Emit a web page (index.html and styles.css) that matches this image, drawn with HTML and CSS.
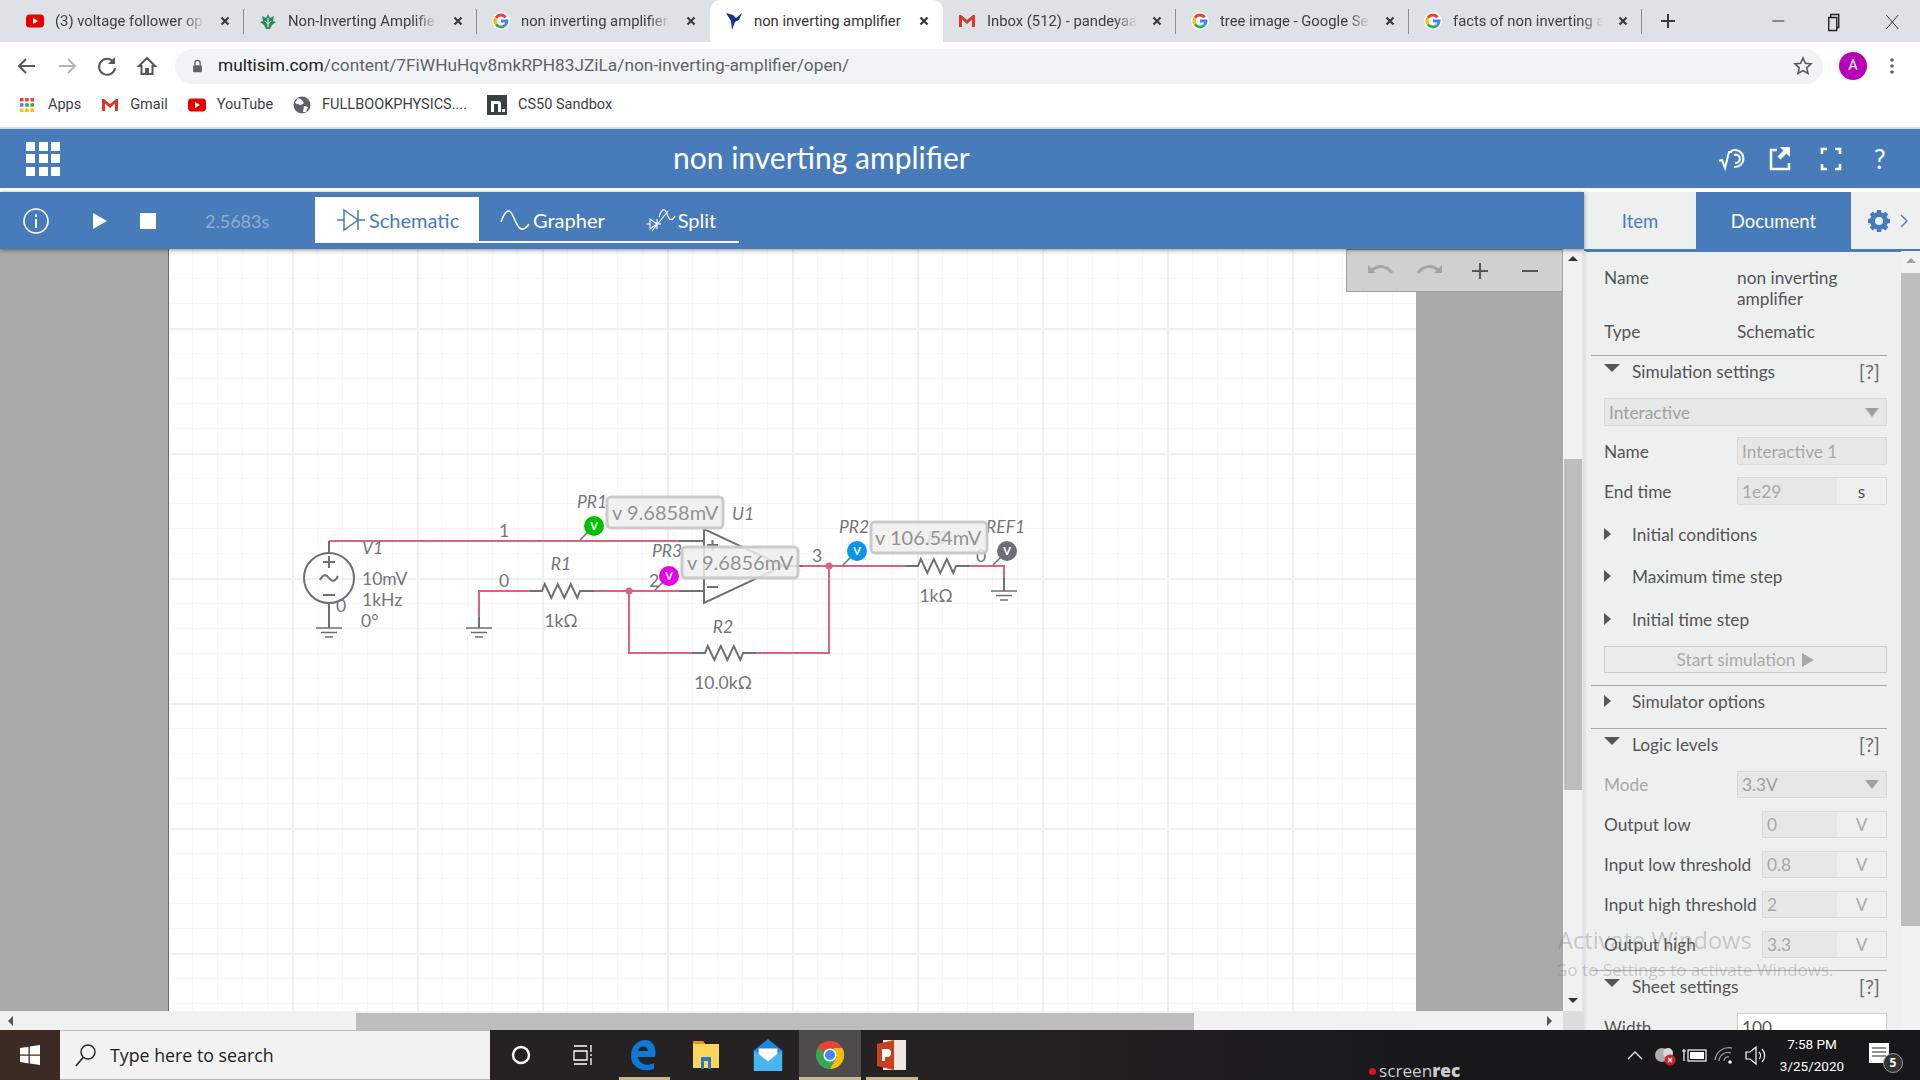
FILE: index.html
```html
<!DOCTYPE html>
<html lang="en">
<head>
<meta charset="utf-8">
<title>non inverting amplifier</title>
<link rel="stylesheet" href="styles.css">
</head>
<body>
<svg class="defs" width="0" height="0">
  <symbol id="g" viewBox="0 0 18 18">
    <circle cx="9" cy="9" r="9" fill="#fff"/>
    <g fill="none" stroke-width="3">
      <path d="M13.6 5.2A6 6 0 0 0 4 5.8" stroke="#ea4335"/>
      <path d="M4 5.8A6 6 0 0 0 4 12.2" stroke="#fbbc05"/>
      <path d="M4 12.2A6 6 0 0 0 13.2 13.2" stroke="#34a853"/>
      <path d="M13.2 13.2A6 6 0 0 0 15 9H9" stroke="#4285f4"/>
    </g>
  </symbol>
  <symbol id="yt" viewBox="0 0 18 18">
    <rect x="0" y="2.5" width="18" height="13" rx="3.5" fill="#e60000"/>
    <path d="M7 6l5 3-5 3z" fill="#fff"/>
  </symbol>
  <symbol id="gm" viewBox="0 0 18 18">
    <path d="M1 15V3h2l6 5 6-5h2v12h-3V7.5L9 12 4 7.5V15z" fill="#d8382c"/>
  </symbol>
  <symbol id="x" viewBox="0 0 10 10">
    <path d="M1.5 1.5l7 7M8.5 1.5l-7 7" stroke="#3a3a3c" stroke-width="2.200" fill="none"/>
  </symbol>
  <symbol id="gnd" viewBox="0 0 28 12">
    <path d="M1 1h26M6 5.500h16M10 10h8" stroke="#6f6f76" stroke-width="1.600" fill="none"/>
  </symbol>
</svg>

<header class="tabstrip">
  <div class="tab"><svg class="fav"><use href="#yt"/></svg><span class="tab-title">(3) voltage follower op</span><svg class="tab-x"><use href="#x"/></svg></div>
  <div class="tab"><svg class="fav" viewBox="0 0 18 18"><path d="M9 2l2 4 4-2-1 5 3 1-4 3-2 4H7l-2-4-4-3 3-1-1-5 4 2z" fill="#2f8a63"/><path d="M9 6v9M6 9l3 3 3-3" stroke="#fff" stroke-width="1" fill="none"/></svg><span class="tab-title">Non-Inverting Amplifie</span><svg class="tab-x"><use href="#x"/></svg></div>
  <div class="tab"><svg class="fav"><use href="#g"/></svg><span class="tab-title">non inverting amplifier</span><svg class="tab-x"><use href="#x"/></svg></div>
  <div class="tab tab-active"><svg class="fav" viewBox="0 0 18 18"><path d="M1 1l7 2 3 3 6-5-3 7-4 2-3 8-1-9z" fill="#13358f"/></svg><span class="tab-title">non inverting amplifier</span><svg class="tab-x"><use href="#x"/></svg></div>
  <div class="tab"><svg class="fav"><use href="#gm"/></svg><span class="tab-title">Inbox (512) - pandeyaa</span><svg class="tab-x"><use href="#x"/></svg></div>
  <div class="tab"><svg class="fav"><use href="#g"/></svg><span class="tab-title">tree image - Google Se</span><svg class="tab-x"><use href="#x"/></svg></div>
  <div class="tab"><svg class="fav"><use href="#g"/></svg><span class="tab-title">facts of non inverting a</span><svg class="tab-x"><use href="#x"/></svg></div>
  <svg class="newtab" viewBox="0 0 16 16"><path d="M8 1v14M1 8h14" stroke="#3a3a3c" stroke-width="2"/></svg>
  <div class="winctl">
    <svg class="winbtn" viewBox="0 0 56 42"><path d="M22 21h12" stroke="#333"/></svg>
    <svg class="winbtn" viewBox="0 0 56 42"><path d="M22.500 17.500h8v13h-8zM24.500 17v-2.500h8v13h-2" fill="none" stroke="#222" stroke-width="1.400"/></svg>
    <svg class="winbtn" viewBox="0 0 56 42"><path d="M23 15l12 14M35 15L23 29" stroke="#333" stroke-width="1"/></svg>
  </div>
</header>

<nav class="omnibar">
  <svg class="navbtn" viewBox="0 0 40 40"><path d="M28 20H13M19 13l-7 7 7 7" fill="none" stroke="#55585c" stroke-width="2"/></svg>
  <svg class="navbtn" viewBox="0 0 40 40"><path d="M12 20h15M21 13l7 7-7 7" fill="none" stroke="#b4b6b9" stroke-width="2"/></svg>
  <svg class="navbtn" viewBox="0 0 40 40"><path d="M26.500 16A8 8 0 1 0 28 22" fill="none" stroke="#55585c" stroke-width="2"/><path d="M28 11v7h-7z" fill="#55585c"/></svg>
  <svg class="navbtn" viewBox="0 0 40 40"><path d="M20 12l-8 8h2.500v8h4.500v-5h2v5h4.500v-8H28z" fill="none" stroke="#55585c" stroke-width="2"/></svg>
  <div class="urlbar">
    <svg class="lock" viewBox="0 0 12 16"><path d="M3 7V4.500a3 3 0 0 1 6 0V7" fill="none" stroke="#5f6368" stroke-width="1.500"/><rect x="1" y="7" width="10" height="8" rx="1" fill="#5f6368"/></svg>
    <span class="url"><b>multisim.com</b>/content/7FiWHuHqv8mkRPH83JZiLa/non-inverting-amplifier/open/</span>
    <svg class="star" viewBox="0 0 20 20"><path d="M10 2l2.400 5.300 5.600.6-4.200 3.900 1.200 5.700-5-2.900-5 2.900 1.200-5.700L2 7.900l5.600-.6z" fill="none" stroke="#55585c" stroke-width="1.600"/></svg>
  </div>
  <div class="avatar">A</div>
  <svg class="dots" viewBox="0 0 4 18"><circle cx="2" cy="3" r="1.800"/><circle cx="2" cy="9" r="1.800"/><circle cx="2" cy="15" r="1.800"/></svg>
</nav>

<div class="bookmarks">
  <div class="bm"><svg class="bm-apps" viewBox="0 0 14 14"><g fill="#ea4335"><rect width="3.500" height="3.500"/><rect x="5.200" width="3.500" height="3.500"/><rect x="10.500" width="3.500" height="3.500"/></g><g fill="#4285f4"><rect y="5.200" width="3.500" height="3.500"/></g><g fill="#34a853"><rect x="5.200" y="5.200" width="3.500" height="3.500"/><rect x="10.500" y="5.200" width="3.500" height="3.500"/></g><g fill="#fbbc05"><rect y="10.500" width="3.500" height="3.500"/><rect x="5.200" y="10.500" width="3.500" height="3.500"/><rect x="10.500" y="10.500" width="3.500" height="3.500"/></g></svg><span>Apps</span></div>
  <div class="bm"><svg class="fav"><use href="#gm"/></svg><span>Gmail</span></div>
  <div class="bm"><svg class="fav"><use href="#yt"/></svg><span>YouTube</span></div>
  <div class="bm"><svg class="fav" viewBox="0 0 18 18"><circle cx="9" cy="9" r="8.500" fill="#5f6368"/><path d="M5 2l4 2 2 3-3 2-4-1-2-1zM11 10l4 1-2 5-3 0z" fill="#fff"/></svg><span>FULLBOOKPHYSICS....</span></div>
  <div class="bm"><svg class="bm-n" viewBox="0 0 20 20"><rect width="20" height="20" fill="#3b4043"/><path d="M4 17V6h7a3 3 0 0 1 3 3v8h-3V9H7v8zM15 14h3v3h-3z" fill="#fff"/></svg><span>CS50 Sandbox</span></div>
</div>

<div class="app">
  <div class="appbar">
    <div class="grid-btn"><i></i><i></i><i></i><i></i><i></i><i></i><i></i><i></i><i></i></div>
    <h1 class="doc-title">non inverting amplifier</h1>
    <div class="appbar-icons">
      <svg class="hdr-ico" viewBox="-3 0 32 32"><path d="M1 18l3-1 3 8 4-16h3" fill="none" stroke="#fff" stroke-width="2"/><path d="M13 8a8.500 8.500 0 1 1 3 16M16 12a4.200 4.200 0 1 1 1 8" fill="none" stroke="#fff" stroke-width="2"/></svg>
      <svg class="hdr-ico" viewBox="2 0 32 32"><path d="M14 7H8v19h18v-6" fill="none" stroke="#fff" stroke-width="2.500"/><path d="M27 4v10l-3.500-3.500-6 6-3-3 6-6L17 4z" fill="#fff"/></svg>
      <svg class="hdr-ico" viewBox="0 0 32 32"><path d="M7 11V6h5M20 6h5v5M25 21v5h-5M12 26H7v-5" fill="none" stroke="#fff" stroke-width="2.600"/></svg>
      <span class="help">?</span>
    </div>
  </div>

  <div class="main">
    <section class="workspace">
      <div class="simbar">
        <svg class="info" viewBox="0 0 26 26"><circle cx="13" cy="13" r="12" fill="none" stroke="#fff" stroke-width="1.600"/><rect x="12" y="11" width="2" height="9" fill="#fff"/><rect x="12" y="6.500" width="2" height="2.500" fill="#fff"/></svg>
        <svg class="play" viewBox="0 0 14 16"><path d="M0 0l14 8L0 16z" fill="#fff"/></svg>
        <div class="stop"></div>
        <span class="simtime">2.5683s</span>
        <div class="viewtabs">
          <div class="viewtab viewtab-on"><svg class="vt-ico" viewBox="0 0 28 24"><path d="M0 12h7M7 2l14 10L7 22zM21 2v20M21 12h7" fill="none" stroke="#477bb9" stroke-width="1.500"/></svg><span>Schematic</span></div>
          <div class="viewtab viewtab-g"><svg class="vt-ico2" viewBox="0 0 30 24"><path d="M1 14C6 0 10 0 14 10S22 26 29 16" fill="none" stroke="#fff" stroke-width="1.500"/></svg><span>Grapher</span></div>
          <div class="viewtab viewtab-s"><svg class="vt-ico2" viewBox="0 0 30 24"><path d="M0 16h4M4 11l7 5-7 5zM11 11v10M11 16h4M6 23L22 3" fill="none" stroke="#fff" stroke-width="1.100"/><path d="M13 9C16 0 19 0 21 6S26 14 29 8" fill="none" stroke="#fff" stroke-width="1.100"/></svg><span>Split</span></div>
        </div>
      </div>

      <div class="canvas-area">
        <div class="canvas">
          <div class="page">
            <svg class="schematic" viewBox="168 249 1248 762" width="1248" height="762">
              <g class="wire">
                <path d="M329 541H679"/>
                <path d="M479 617V591H530"/>
                <path d="M592 591H679"/>
                <path d="M629 591V653H692"/>
                <path d="M755 653H829V566"/>
                <path d="M803 566H905"/>
                <path d="M966 566H1004V578"/>
              </g>
              <circle class="dot" cx="629" cy="591" r="3.500"/>
              <circle class="dot" cx="829" cy="566" r="3.500"/>
              <g class="part">
                <path d="M329 541V553M329 603V628"/>
                <circle cx="329" cy="578" r="25"/>
                <path d="M323 562h12M329 556v12M323 595h12"/>
                <path d="M320 580c3-6 6-6 9-2s6 4 9-2"/>
                <path d="M479 617V628M1004 578V591"/>
                <path d="M530 591h12l2.800-7 6.500 14 6.500-14 6.500 14 6.500-14 6.500 14 2.700-7h14"/>
                <path d="M692 653h13l2.800-7 6.500 14 6.500-14 6.500 14 6.500-14 6.500 14 2.700-7h13"/>
                <path d="M905 566h13l2.800-7 6.500 14 6.500-14 6.500 14 6.500-14 6.500 14 2.700-7h13"/>
                <path d="M679 541h25M679 591h25M783 566h20"/>
                <path d="M704 529V603L783 566z"/>
                <path d="M707 545h11M712.500 540v11M707 587h11"/>
              </g>
              <use href="#gnd" x="315" y="627" width="28" height="12"/>
              <use href="#gnd" x="465" y="627" width="28" height="12"/>
              <use href="#gnd" x="990" y="590" width="28" height="12"/>

              <g class="lbl">
                <text x="504" y="537" text-anchor="middle">1</text>
                <text x="504" y="587" text-anchor="middle">0</text>
                <text x="362" y="585">10mV</text>
                <text x="362" y="606">1kHz</text>
                <text x="361" y="627">0°</text>
                <text x="341" y="612" text-anchor="middle">0</text>
                <text x="561" y="627" text-anchor="middle">1kΩ</text>
                <text x="723" y="689" text-anchor="middle">10.0kΩ</text>
                <text x="936" y="602" text-anchor="middle">1kΩ</text>
                <text x="817" y="562" text-anchor="middle">3</text>
                <text x="649" y="587">2</text>
                <text x="981" y="562" text-anchor="middle">0</text>
              </g>
              <g class="lbl lbl-i">
                <text x="362" y="554">V1</text>
                <text x="561" y="570" text-anchor="middle">R1</text>
                <text x="723" y="633" text-anchor="middle">R2</text>
                <text x="937" y="544" text-anchor="middle">R3</text>
                <text x="577" y="508">PR1</text>
                <text x="732" y="520">U1</text>
                <text x="652" y="557">PR3</text>
                <text x="839" y="533">PR2</text>
                <text x="986" y="533">REF1</text>
              </g>

              <g class="tail">
                <path d="M580 540L594 526"/>
                <path d="M655 590L669 576"/>
                <path d="M843 565L857 551"/>
                <path d="M993 565L1007 551"/>
              </g>
              <circle class="pb-green" cx="594" cy="526" r="10"/>
              <circle class="pb-mag" cx="669" cy="576" r="10"/>
              <circle class="pb-blue" cx="857" cy="551" r="10"/>
              <circle class="pb-gray" cx="1007" cy="551" r="10"/>
              <g class="pb-v" text-anchor="middle">
                <text x="594" y="530">V</text>
                <text x="669" y="580">V</text>
                <text x="857" y="555">V</text>
                <text x="1007" y="555">V</text>
              </g>

              <rect class="vbox" x="607" y="497" width="116" height="31" rx="4"/>
              <text class="vtext" x="612" y="520">v 9.6858mV</text>
              <rect class="vbox" x="682" y="547" width="116" height="31" rx="4"/>
              <text class="vtext" x="687" y="570">v 9.6856mV</text>
              <rect class="vbox" x="871" y="522" width="116" height="31" rx="4"/>
              <text class="vtext" x="875" y="545">v 106.54mV</text>
            </svg>
          </div>
          <div class="zoombar">
            <svg class="zb" viewBox="0 0 30 20"><path d="M3 4v8h8z" fill="#a4a4a4"/><path d="M7 9c6-5 14-5 20 3" fill="none" stroke="#a4a4a4" stroke-width="3"/></svg>
            <svg class="zb" viewBox="0 0 30 20"><path d="M27 4v8h-8z" fill="#a4a4a4"/><path d="M23 9c-6-5-14-5-20 3" fill="none" stroke="#a4a4a4" stroke-width="3"/></svg>
            <svg class="zb" viewBox="0 0 30 20"><path d="M15 2v16M7 10h16" stroke="#555" stroke-width="2"/></svg>
            <svg class="zb" viewBox="0 0 30 20"><path d="M7 10h16" stroke="#555" stroke-width="2"/></svg>
          </div>
        </div>
        <div class="vscroll"><i class="arr-up"></i><div class="vthumb"></div><i class="arr-down"></i></div>
        <div class="hscroll"><i class="arr-left"></i><div class="hthumb"></div><i class="arr-right"></i></div>
        <div class="corner"></div>
      </div>
    </section>

    <aside class="panel">
      <div class="panel-tabs">
        <div class="ptab ptab-item">Item</div>
        <div class="ptab ptab-doc">Document</div>
        <div class="ptab-gear">
          <svg class="gear" viewBox="0 0 24 24"><circle cx="12" cy="12" r="6.500" fill="none" stroke="#477bb9" stroke-width="5"/><g stroke="#477bb9" stroke-width="4.500"><path d="M12 1v5M12 18v5M1 12h5M18 12h5M4.200 4.200l3.500 3.500M16.300 16.300l3.500 3.500M19.800 4.200l-3.500 3.500M7.700 16.300l-3.500 3.500"/></g></svg>
          <svg class="chev" viewBox="0 0 8 14"><path d="M1 1l6 6-6 6" fill="none" stroke="#477bb9" stroke-width="1.400"/></svg>
        </div>
      </div>
      <div class="panel-main">
        <div class="panel-body">
          <div class="prop prop-tall"><span class="k">Name</span><span class="v">non inverting amplifier</span></div>
          <div class="prop mt11"><span class="k">Type</span><span class="v">Schematic</span></div>

          <div class="sec mt13"><i class="tri-d"></i><span class="sec-name">Simulation settings</span><span class="qm">[?]</span></div>
          <div class="sel mt12"><span>Interactive</span><i class="sel-arr"></i></div>
          <div class="prop h28 mt11"><span class="k">Name</span><div class="inp inp-full">Interactive 1</div></div>
          <div class="prop h28 mt12"><span class="k">End time</span><div class="inp-wrap"><div class="inp">1e29</div><div class="unit unit-on">s</div></div></div>
          <div class="sub mt14"><i class="tri-r"></i><span>Initial conditions</span></div>
          <div class="sub mt12"><i class="tri-r"></i><span>Maximum time step</span></div>
          <div class="sub mt13"><i class="tri-r"></i><span>Initial time step</span></div>
          <div class="btn mt12"><span>Start simulation</span><i class="btn-arr"></i></div>

          <div class="sec mt12"><i class="tri-r"></i><span class="sec-name">Simulator options</span></div>
          <div class="sec mt12"><i class="tri-d"></i><span class="sec-name">Logic levels</span><span class="qm">[?]</span></div>
          <div class="prop h27 mt12 dim"><span class="k">Mode</span><div class="sel sel-sm"><span>3.3V</span><i class="sel-arr"></i></div></div>
          <div class="prop h27 mt13"><span class="k">Output low</span><div class="inp-wrap inp-short"><div class="inp">0</div><div class="unit">V</div></div></div>
          <div class="prop h27 mt13"><span class="k">Input low threshold</span><div class="inp-wrap inp-short"><div class="inp">0.8</div><div class="unit">V</div></div></div>
          <div class="prop h27 mt13"><span class="k">Input high threshold</span><div class="inp-wrap inp-short"><div class="inp">2</div><div class="unit">V</div></div></div>
          <div class="prop h27 mt13"><span class="k">Output high</span><div class="inp-wrap inp-short"><div class="inp">3.3</div><div class="unit">V</div></div></div>

          <div class="sec mt12"><i class="tri-d"></i><span class="sec-name">Sheet settings</span><span class="qm">[?]</span></div>
          <div class="prop h28 mt12"><span class="k">Width</span><div class="inp inp-white">100</div></div>
        </div>
        <div class="pscroll"><i class="arr-up arr-up-dim"></i><div class="pthumb"></div><i class="arr-down"></i></div>
      </div>
    </aside>
  </div>
</div>

<footer class="taskbar">
  <div class="startbtn"><svg class="win" viewBox="0 0 20 20"><path d="M0 3l8.500-1.300v7.800H0zM9.800 1.500L20 0v9.500H9.800zM0 10.700h8.500v7.700L0 17.100zM9.800 10.700H20V20L9.800 18.600z" fill="#fff"/></svg></div>
  <div class="searchbox">
    <svg class="mag" viewBox="0 0 22 24"><circle cx="13" cy="9" r="7" fill="none" stroke="#222" stroke-width="1.400"/><path d="M8 14.500L1 23" stroke="#222" stroke-width="1.600"/></svg>
    <span>Type here to search</span>
  </div>
  <div class="tb"><svg class="tb-ico" viewBox="0 0 24 24"><circle cx="12" cy="12" r="8" fill="none" stroke="#fff" stroke-width="2.400"/></svg></div>
  <div class="tb"><svg class="tb-ico" viewBox="0 0 24 24"><path d="M3 3h13M3 21h13M3 8h13v9H3z" fill="none" stroke="#fff" stroke-width="1.300"/><path d="M20 2v7M20 11v2M20 15v7" stroke="#fff" stroke-width="1.300"/></svg></div>
  <div class="tb tb-run"><svg class="tb-ico tb-big" viewBox="0 0 28 32"><path d="M25 18H8c.5 7 10 10 16 6v6C12 34 1 28 1 17 1 6 9 1 15 1c7 0 12 6 10 17zM18 12c0-6-9-6-10 0z" fill="#0f78d4"/></svg></div>
  <div class="tb"><svg class="tb-ico tb-big" viewBox="0 0 28 32"><path d="M1 2h10l2 3h14v24H1z" fill="#fcd65c"/><path d="M1 2h10l2 3H1z" fill="#d99a1c"/><path d="M9 30V18h10v12h-3v-8h-4v8z" fill="#2a78c8"/></svg></div>
  <div class="tb"><svg class="tb-ico tb-big" viewBox="0 0 30 34"><path d="M15 0l15 12v22H0V12z" fill="#1e87d8"/><path d="M0 12l15 12 15-12v22H0z" fill="#45b6f0"/><path d="M5 10h20v6l-10 8L5 16z" fill="#fff"/></svg></div>
  <div class="tb tb-active tb-run"><svg class="tb-ico tb-big" viewBox="0 0 32 32"><circle cx="16" cy="16" r="15" fill="#34a853"/><path d="M16 1a15 15 0 0 1 13 7.500H16l-8 4L3 8A15 15 0 0 1 16 1z" fill="#ea4335"/><path d="M29 8.500A15 15 0 0 1 16 31l7-12-3-10.500z" fill="#fbbc05"/><circle cx="16" cy="16" r="7" fill="#fff"/><circle cx="16" cy="16" r="5.300" fill="#4285f4"/></svg></div>
  <div class="tb tb-run"><svg class="tb-ico tb-big" viewBox="0 0 30 32"><rect x="6" y="1" width="23" height="30" fill="#f0e6e2"/><path d="M0 5l17-4v30L0 27z" fill="#c8421f"/><path d="M5 22V10h5a4 4 0 0 1 0 8H8v4z" fill="#fff"/></svg></div>
  <div class="tray">
    <svg class="tray-ico" viewBox="0 0 30 30"><path d="M8 19l7-7 7 7" fill="none" stroke="#e8e8e8" stroke-width="1.400"/></svg>
    <svg class="tray-ico" viewBox="0 0 30 30"><circle cx="12" cy="15" r="7" fill="#a8aeb4"/><circle cx="18" cy="13" r="5" fill="#d8d8d8"/><circle cx="20" cy="20" r="5.500" fill="#d21e2c"/><path d="M18 18l4 4M22 18l-4 4" stroke="#fff" stroke-width="1.200"/></svg>
    <svg class="tray-ico" viewBox="0 0 30 30"><rect x="8" y="10" width="18" height="11" fill="none" stroke="#fff" stroke-width="1.200"/><rect x="10" y="12" width="14" height="7" fill="#fff"/><path d="M4 9v12M2 11h4" stroke="#fff" stroke-width="1.200"/></svg>
    <svg class="tray-ico" viewBox="0 0 30 30"><path d="M5 20A14 14 0 0 1 22 8M9 21A9 9 0 0 1 21 13M14 21a4 4 0 0 1 5-4" fill="none" stroke="#999" stroke-width="1.300"/><circle cx="20" cy="22" r="1.800" fill="#fff"/></svg>
    <svg class="tray-ico" viewBox="0 0 30 30"><path d="M6 12h4l6-5v17l-6-5H6z" fill="none" stroke="#fff" stroke-width="1.200"/><path d="M19 12c2 2 2 5 0 7M22 9c3.500 3.500 3.500 9.500 0 13" fill="none" stroke="#fff" stroke-width="1.200"/></svg>
    <div class="clock"><span>7:58 PM</span><span>3/25/2020</span></div>
    <div class="notif"><svg class="note" viewBox="0 0 20 20"><rect width="20" height="20" fill="#fff"/><path d="M3 5h14M3 9h14M3 13h14" stroke="#222" stroke-width="1.200"/></svg><span class="badge">5</span></div>
  </div>
  <div class="screenrec"><i></i><span>screen<b>rec</b></span></div>
</footer>

<div class="activate"><p class="act1">Activate Windows</p><p class="act2">Go to Settings to activate Windows.</p></div>
</body>
</html>
```

FILE: styles.css
```css
* { box-sizing: border-box; }
html, body { margin: 0; padding: 0; }
body {
  width: 1920px; height: 1080px; overflow: hidden;
  display: flex; flex-direction: column;
  font-family: "Lato", sans-serif; background: #fff; position: relative;
}
.defs { position: absolute; }
i { display: block; }

/* chrome tabs */
.tabstrip { height: 42px; flex: none; background: #dee1e6; display: flex; align-items: center; padding-left: 11px; font-family: "Roboto", sans-serif; }
.tab { width: 233px; height: 42px; display: flex; align-items: center; padding: 0 14px 0 15px; position: relative; font-size: 14.800px; color: #3c4043; }
.tab::after { content: ""; position: absolute; right: 0; top: 9px; height: 25px; width: 1px; background: #8b8e92; }
.tab-active { background: #fff; border-radius: 10px 10px 0 0; color: #333; }
.tab-active::after { display: none; }
.tab:nth-child(3)::after { display: none; }
.fav { width: 18px; height: 18px; flex: none; }
.tab-title { margin-left: 11px; width: 150px; white-space: nowrap; overflow: hidden; -webkit-mask-image: linear-gradient(to right, #000 85%, transparent 100%); mask-image: linear-gradient(to right, #000 85%, transparent 100%); }
.tab-active .tab-title { -webkit-mask-image: none; mask-image: none; }
.tab-x { width: 10px; height: 10px; margin-left: 15px; flex: none; }
.newtab { width: 16px; height: 16px; margin-left: 18px; flex: none; }
.winctl { margin-left: auto; display: flex; margin-right: 1px; }
.winbtn { width: 56.500px; height: 42px; }

/* omnibar */
.omnibar { height: 48px; flex: none; display: flex; align-items: center; padding-left: 7px; background: #fff; }
.navbtn { width: 40px; height: 40px; flex: none; }
.urlbar { margin-left: 8px; width: 1648px; height: 35px; border-radius: 18px; background: #f1f3f4; display: flex; align-items: center; padding-left: 17px; }
.lock { width: 11px; height: 14px; flex: none; }
.url { margin-left: 15px; font: 17.300px/33px "Roboto", sans-serif; height: 35px; color: #5f6368; white-space: nowrap; }
.url b { font-weight: 400; color: #202124; }
.star { width: 20px; height: 20px; margin-left: auto; margin-right: 10px; }
.avatar { margin-left: 16px; width: 28px; height: 28px; border-radius: 50%; background: #b800b8; color: #fff; font: 14.500px/28px "Roboto", sans-serif; text-align: center; flex: none; }
.dots { width: 4px; height: 18px; margin-left: 23px; fill: #5f6368; }

/* bookmarks */
.bookmarks { height: 37px; flex: none; display: flex; align-items: center; padding: 0 0 8px 20px; gap: 20px; background: #fff; font: 14.500px "Roboto", sans-serif; color: #3c4043; }
.bm { display: flex; align-items: center; gap: 11px; white-space: nowrap; }
.bm-apps { width: 14px; height: 14px; }
.bm:first-child { gap: 14px; }
.bm-n { width: 20px; height: 20px; }

/* app */
.app { flex: 1; display: flex; flex-direction: column; border-top: 2px solid #d3dae3; min-height: 0; }
.appbar { height: 59px; flex: none; background: #477bb9; display: flex; align-items: center; position: relative; padding-left: 26px; }
.grid-btn { display: grid; grid-template-columns: repeat(3, 9px); grid-auto-rows: 9px; gap: 3.500px; }
.grid-btn i { background: #fff; }
.doc-title { margin: -4px 0 0 613px; width: 295px; font: 400 30px "Lato", sans-serif; color: #fff; white-space: nowrap; text-align: center; }
.appbar-icons { margin-left: auto; display: flex; align-items: center; width: 205px; }
.hdr-ico { width: 32px; height: 32px; margin-right: 18px; flex: none; }
.help { color: #fff; font-size: 26px; margin-left: 9px; width: 20px; }

.main { flex: 1; display: flex; margin-top: 4px; min-height: 0; }
.workspace { width: 1584px; flex: none; display: flex; flex-direction: column; }
.simbar { height: 57px; flex: none; background: #477bb9; display: flex; align-items: center; padding-left: 23px; position: relative; z-index: 2; box-shadow: 0 1px 4px rgba(0,0,0,.45); }
.info { width: 26px; height: 26px; flex: none; }
.play { width: 14px; height: 16px; margin-left: 44px; flex: none; }
.stop { width: 16px; height: 16px; background: #fff; margin-left: 33px; flex: none; }
.simtime { margin-left: 49px; width: 110px; flex: none; color: #8eacd6; font-size: 18px; }
.viewtabs { width: 424px; height: 46px; align-self: flex-end; margin-bottom: 6px; display: flex; border-bottom: 2px solid #fff; color: #fff; font-size: 20px; }
.viewtab { display: flex; align-items: center; height: 46px; }
.viewtab-on { width: 164px; padding-left: 22px; background: #fff; color: #477bb9; gap: 4px; }
.viewtab-g { padding-left: 21px; gap: 3px; }
.viewtab-s { padding-left: 41px; gap: 2px; }
.vt-ico { width: 28px; height: 24px; flex: none; }
.vt-ico2 { width: 30px; height: 24px; flex: none; }

.canvas-area { height: 781px; flex: none; display: grid; grid-template-columns: 1563px 21px; grid-template-rows: 762px 19px; background: #f1f1f1; }
.canvas { background: #a9a9a9; position: relative; overflow: hidden; padding-left: 168px; }
.page {
  width: 1248px; height: 762px; border-left: 1px solid #6a6a6a;
  background-color: #fff;
  background-image:
    linear-gradient(to right, #efefef 2px, transparent 2px),
    linear-gradient(to bottom, #efefef 2px, transparent 2px),
    linear-gradient(to right, #f7f7f7 1px, transparent 1px),
    linear-gradient(to bottom, #f7f7f7 1px, transparent 1px);
  background-size: 125px 125px, 125px 125px, 25px 25px, 25px 25px;
  background-position: 123px 0, 0 79px, 23px 0, 0 4px;
}
.schematic { display: block; margin-left: -1px; }
.wire path { fill: none; stroke: #d9647f; stroke-width: 2; }
.dot { fill: #d9647f; }
.part path, .part circle { fill: none; stroke: #6f6f76; stroke-width: 2; }
.lbl text { font: 17.500px "Lato", sans-serif; fill: #75757c; }
.lbl-i text { font-style: italic; }
.tail path { stroke: #6f6f76; stroke-width: 1.500; }
.pb-green { fill: #00c000; } .pb-mag { fill: #e800e8; } .pb-blue { fill: #0a95e8; } .pb-gray { fill: #6f6f76; }
.pb-v text { font: 700 11px "Lato", sans-serif; fill: #fff; }
.vbox { fill: rgba(238,238,238,.85); stroke: rgba(200,200,200,.95); stroke-width: 3; }
.vtext { font: 20px "Lato", sans-serif; fill: #939393; }

.zoombar { position: absolute; right: 0; top: 0; width: 217px; height: 43px; background: #d0d0d0; border: 1px solid #a2a2a2; border-top-color: #8a8a8a; display: flex; align-items: center; padding-left: 18px; gap: 20px; }
.zb { width: 30px; height: 20px; flex: none; }

.vscroll { background: #f1f1f1; position: relative; border-right: 2px solid #e0e4e8; }
.vthumb { position: absolute; top: 210px; left: 1px; width: 18px; height: 331px; background: #bdbdbd; }
.hscroll { background: #f1f1f1; position: relative; margin-top: 2px; height: 17px; }
.hthumb { position: absolute; left: 356px; width: 838px; top: 0; height: 17px; background: #bdbdbd; }
.corner { background: #dcdcdc; }
.arr-up, .arr-down, .arr-left, .arr-right { position: absolute; width: 0; height: 0; border: 5px solid transparent; }
.arr-up { border-bottom-color: #333; top: 2px; left: 5px; }
.arr-up-dim { border-bottom-color: #a0a0a0; }
.arr-down { border-top-color: #333; bottom: 3px; left: 5px; }
.arr-left { border-right-color: #555; left: 3px; top: 3px; }
.arr-right { border-left-color: #555; left: 1547px; top: 3px; }

/* right panel */
.panel { width: 336px; flex: none; background: #eef0f0; display: flex; flex-direction: column; min-height: 0; color: #555; font-size: 17.300px; overflow: hidden; }
.panel-tabs { height: 60px; flex: none; display: flex; border-bottom: 3px solid #477bb9; }
.ptab { height: 57px; display: flex; align-items: center; justify-content: center; font-size: 18.500px; }
.ptab-item { width: 112px; color: #477bb9; }
.ptab-doc { width: 155px; background: #477bb9; color: #fff; }
.ptab-gear { display: flex; align-items: center; padding-left: 16px; gap: 9px; }
.gear { width: 24px; height: 24px; }
.chev { width: 8px; height: 14px; }
.panel-main { flex: 1; display: flex; min-height: 0; border-left: 2px solid #e0e4e8; margin-top: -1px; }
.panel-body { width: 315px; flex: none; padding: 16px 0 0 18px; overflow: hidden; height: 779px; }
.pscroll { width: 19px; flex: none; background: #f1f1f1; position: relative; }
.pthumb { position: absolute; top: 22px; left: 0; width: 19px; height: 653px; background: #bdbdbd; }

.mt11 { margin-top: 11px; } .mt12 { margin-top: 12px; } .mt13 { margin-top: 13px; } .mt14 { margin-top: 14px; }
.prop { display: flex; align-items: center; height: 22px; width: 283px; white-space: nowrap; line-height: 21px; }
.prop .k { width: 133px; flex: none; }
.prop-tall { height: 42px; align-items: flex-start; }
.prop-tall .v { white-space: normal; width: 120px; }
.h27 { height: 27px; } .h28 { height: 28px; }
.dim { color: #a8a8a8; }
.sec { border-top: 1px solid #a8a8a8; margin-left: -13px; width: 296px; padding-left: 13px; height: 31px; display: flex; align-items: center; position: relative; }
.sec-name { margin-left: 10px; }
.qm { margin-left: auto; margin-right: 7px; font-size: 20px; color: #6e6e6e; }
.tri-d { width: 0; height: 0; border: 8px solid transparent; border-top: 8px solid #555; border-bottom: 0; margin-top: -6px; margin-right: 2px; flex: none; }
.tri-r { width: 0; height: 0; border: 6.500px solid transparent; border-left: 7px solid #555; border-right: 0; flex: none; margin-right: 21px; margin-left: 0; }
.sec .tri-r { margin-right: 11px; }
.sub { height: 30px; display: flex; align-items: center; }
.sel { width: 283px; height: 28px; background: #e6e8e8; border: 1px solid #d8dada; display: flex; align-items: center; padding: 0 7px 0 4px; color: #a0a0a0; }
.sel-sm { width: 150px; height: 27px; padding-left: 4px; }
.sel-arr { margin-left: auto; width: 0; height: 0; border: 7px solid transparent; border-top: 9px solid #a0a0a0; border-bottom: 0; }
.inp { background: #e6e8e8; border: 1px solid #d8dada; border-right: 0; color: #a8a8a8; height: 100%; display: flex; align-items: center; padding-left: 4px; width: 100px; flex: none; }
.inp-full { width: 150px; border-right: 1px solid #d8dada; }
.inp-white { width: 150px; background: #fff; border: 1px solid #ccc; color: #555; }
.inp-wrap { display: flex; width: 150px; height: 100%; }
.inp-short { width: 125px; margin-left: 25px; }
.inp-short .inp { width: 75px; }
.unit { flex: 1; border: 1px solid #d8dada; border-left: 0; display: flex; align-items: center; justify-content: center; color: #a8a8a8; }
.unit-on { color: #555; }
.btn { width: 283px; height: 27px; background: #ebebeb; border: 1px solid #ccc; color: #aaa; display: flex; align-items: center; justify-content: center; gap: 7px; }
.btn-arr { width: 0; height: 0; border: 7px solid transparent; border-left: 12px solid #aaa; border-right: 0; }

/* taskbar */
.taskbar { height: 50px; flex: none; position: absolute; left: 0; right: 0; top: 1030px; background: linear-gradient(to right, #262224 0, #262224 50%, #18181a 75%, #18181a 100%); display: flex; color: #fff; font-family: "Open Sans", sans-serif; }
.startbtn { width: 60px; background: #3c2a24; display: flex; align-items: center; justify-content: center; }
.win { width: 20px; height: 20px; }
.searchbox { width: 430px; background: #f2f2f2; display: flex; align-items: center; padding-left: 15px; color: #222; font-size: 17.800px; border: 1px solid #b8b8b8; border-width: 1px 0; }
.mag { width: 22px; height: 24px; margin-right: 13px; }
.tb { width: 61.800px; display: flex; align-items: center; justify-content: center; position: relative; }
.tb-run::after { content: ""; position: absolute; left: 5px; right: 5px; bottom: 0; height: 3px; background: #c8b98d; }
.tb-active { background: #4f4b4c; }
.tb-active::after { left: 0; right: 0; }
.tb-ico { width: 24px; height: 24px; }
.tb-big { width: 30px; height: 32px; }
.tray { margin-left: auto; margin-right: 16px; display: flex; align-items: center; }
.tray-ico { width: 30px; height: 30px; }
.clock { width: 84px; display: flex; flex-direction: column; align-items: center; font-size: 13.500px; line-height: 22px; font-family: "Roboto", sans-serif; }
.notif { width: 50px; height: 50px; position: relative; display: flex; align-items: center; justify-content: center; }
.note { width: 20px; height: 20px; margin-top: -4px; }
.badge { position: absolute; left: 29px; top: 23px; width: 20px; height: 20px; border-radius: 50%; border: 1px solid #999; background: #333; font-size: 12px; font-weight: 700; line-height: 18px; text-align: center; }
.screenrec { position: absolute; left: 1369px; top: 33px; display: flex; align-items: center; gap: 3px; font: 17.200px "Open Sans", sans-serif; color: #ccc; line-height: 16px; }
.screenrec i { width: 7px; height: 7px; border-radius: 50%; background: #e01020; }
.screenrec b { font-weight: 800; }

.activate { position: absolute; left: 1558px; top: 922px; width: 340px; color: rgba(110,110,110,.33); overflow: hidden; }
.activate p { margin: 0; white-space: nowrap; font-family: "Open Sans", sans-serif; }
.act1 { font-size: 23.600px; line-height: 36px; }
.act2 { font-size: 17px; line-height: 24px; margin-left: -3px !important; }
```
